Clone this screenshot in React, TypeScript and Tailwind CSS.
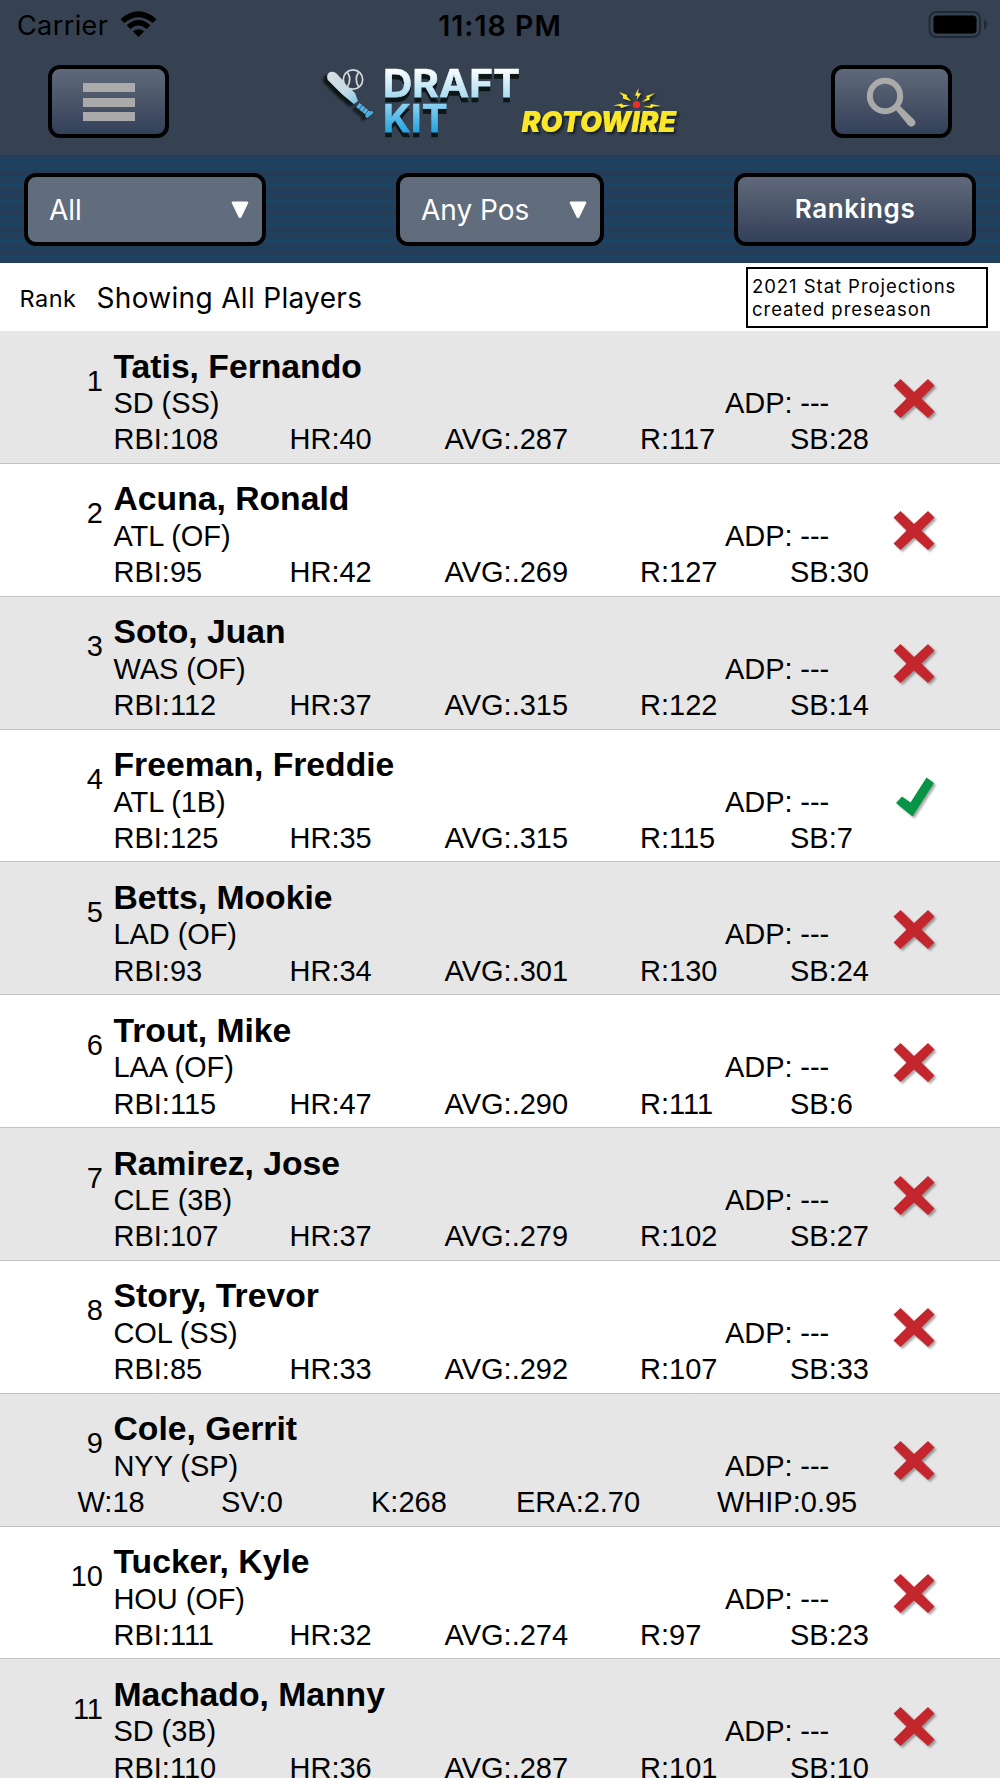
const players: [string, string, string[]][] = [
  ['Tatis, Fernando', 'SD (SS)', ['RBI:108', 'HR:40', 'AVG:.287', 'R:117', 'SB:28']],
  ['Acuna, Ronald', 'ATL (OF)', ['RBI:95', 'HR:42', 'AVG:.269', 'R:127', 'SB:30']],
  ['Soto, Juan', 'WAS (OF)', ['RBI:112', 'HR:37', 'AVG:.315', 'R:122', 'SB:14']],
  ['Freeman, Freddie', 'ATL (1B)', ['RBI:125', 'HR:35', 'AVG:.315', 'R:115', 'SB:7']],
  ['Betts, Mookie', 'LAD (OF)', ['RBI:93', 'HR:34', 'AVG:.301', 'R:130', 'SB:24']],
  ['Trout, Mike', 'LAA (OF)', ['RBI:115', 'HR:47', 'AVG:.290', 'R:111', 'SB:6']],
  ['Ramirez, Jose', 'CLE (3B)', ['RBI:107', 'HR:37', 'AVG:.279', 'R:102', 'SB:27']],
  ['Story, Trevor', 'COL (SS)', ['RBI:85', 'HR:33', 'AVG:.292', 'R:107', 'SB:33']],
  ['Cole, Gerrit', 'NYY (SP)', ['W:18', 'SV:0', 'K:268', 'ERA:2.70', 'WHIP:0.95']],
  ['Tucker, Kyle', 'HOU (OF)', ['RBI:111', 'HR:32', 'AVG:.274', 'R:97', 'SB:23']],
  ['Machado, Manny', 'SD (3B)', ['RBI:110', 'HR:36', 'AVG:.287', 'R:101', 'SB:10']],
];

const button = 'box-border flex items-center rounded-[12px] border-[4px] border-black';
const glossy = 'bg-linear-to-b from-[#5f697a] via-[#4a5569] to-[#343f5a]';

function StatusBar() {
  return (
    <div className="grid h-[50px] grid-cols-3 items-center px-[17px]">
      <div className="flex items-center">
        <span className="w-[92px] pt-[2px] text-[27px] whitespace-nowrap tracking-[0.400px]">Carrier</span>
        <svg className="mb-[3px] ml-[11px]" width="37" height="28" viewBox="0 0 37 28">
          <path d="M0.5 9.2Q18.500-6.500 36.500 9.200L32.700 13Q18.500 1.500 4.300 13Z" />
          <path d="M6.600 15.300Q18.500 4.900 30.400 15.300L26.600 19Q18.500 12.100 10.400 19Z" />
          <path d="M12.900 21.500Q18.500 16.800 24.100 21.500L18.500 27Z" />
        </svg>
      </div>
      <div className="pt-[2px] text-center text-[28.500px] font-semibold tracking-[1.050px]">11:18 PM</div>
      <svg className="-mr-[5px] mb-[1px] justify-self-end" width="60" height="28" viewBox="0 0 60 28">
        <rect x="1.500" y="1" width="50.500" height="25" rx="7" fill="none" stroke="#202a37" strokeWidth="2" />
        <rect x="5.500" y="4.500" width="43" height="18" rx="3.500" />
        <path d="M56 8.500Q59 10 59 13.500Q59 17 56 18.500Z" fill="#202a37" />
      </svg>
    </div>
  );
}

function Logo() {
  return (
    <svg width="370" height="82" viewBox="315 60 370 82">
      <defs>
        <linearGradient id="sky" gradientUnits="userSpaceOnUse" x1="0" y1="68" x2="0" y2="132">
          <stop offset="0" stopColor="#fff" />
          <stop offset="0.45" stopColor="#a9dcf3" />
          <stop offset="1" stopColor="#22a5e2" />
        </linearGradient>
        <linearGradient id="bat" gradientUnits="userSpaceOnUse" x1="328" y1="72" x2="371" y2="116">
          <stop offset="0" stopColor="#dadde0" />
          <stop offset="0.45" stopColor="#bfdbe9" />
          <stop offset="1" stopColor="#35a9e3" />
        </linearGradient>
        <filter id="drop" x="-20%" y="-20%" width="150%" height="150%">
          <feDropShadow dx="0" dy="5" stdDeviation="0.7" floodColor="#0d1218" floodOpacity="1" />
        </filter>
        <filter id="dropBat" x="-20%" y="-20%" width="150%" height="150%">
          <feDropShadow dx="-4" dy="3" stdDeviation="0.9" floodColor="#0d1218" floodOpacity="1" />
        </filter>
        <filter id="dropWire" x="-10%" y="-20%" width="130%" height="150%">
          <feDropShadow dx="2" dy="2" stdDeviation="0.8" floodColor="#10151c" floodOpacity="0.9" />
        </filter>
      </defs>
      <g filter="url(#dropBat)">
        <path d="M328 80C325 73 332 69 337 74L348 86L355 93L358 101L354 104L342 94Z" fill="url(#bat)" />
        <path d="M358 105L369 114" stroke="#55b5e6" strokeWidth="5" strokeDasharray="3.200 0.700" />
        <path d="M367 116L371.500 112.500" stroke="#43afe3" strokeWidth="3" strokeLinecap="round" />
      </g>
      <g fill="none" stroke="#d5d9dc" strokeWidth="1.700">
        <circle cx="353" cy="79.500" r="9.700" fill="#344050" />
        <path d="M347.500 72.500Q352 79 347.500 86.500M358.500 72.500Q354 79 358.500 86.500" />
      </g>
      <g filter="url(#drop)" fill="url(#sky)" stroke="url(#sky)" strokeWidth="0.500" fontFamily="Inter, sans-serif" fontWeight="700" fontSize="38.500">
        <text x="383" y="97" textLength="137" lengthAdjust="spacingAndGlyphs">DRAFT</text>
        <text x="383" y="132" textLength="64.500" lengthAdjust="spacingAndGlyphs">KIT</text>
      </g>
      <g filter="url(#dropWire)" fill="#fbe72a">
        <text x="521.500" y="131.500" fontFamily="Inter, sans-serif" fontWeight="900" fontStyle="italic" fontSize="28" textLength="154.500" lengthAdjust="spacingAndGlyphs">ROTOWIRE</text>
        <path d="M613 105.500L622 103.500L623 105L630 105L621 108L620 106Z" />
        <path d="M619 92L627 95L627 97L631 101L623 98.500L623 96Z" />
        <path d="M638.500 88L635 95.500L637.500 96L636.500 100L641 93.500L638 93Z" />
        <path d="M655 93L646 96L647 98L642 102L650 99.500L649 97.500Z" />
        <path d="M661 106L651 104L650 106L643 106.500L652 108L653 106.500Z" />
      </g>
      <circle cx="636.500" cy="104.500" r="3.600" fill="#ee2c2b" />
    </svg>
  );
}

function Mark({ taken }: { taken: boolean }) {
  return (
    <svg className="overflow-visible drop-shadow-[2px_2px_1px_rgba(0,0,0,0.35)]" width="42" height="42" viewBox="0 0 42 42">
      {taken ? (
        <path d="M9 19.500L17.500 25.500L33.500 0.500L41 6L19.500 39.500L3 26Z" fill="#079447" />
      ) : (
        <path d="M7.500 0L21 13L35 0L41.500 6.500L28.500 19.500L41.500 32.500L35 39L21 26.500L7.500 39L0.500 32.500L13.500 19.500L0.500 6.500Z" fill="#c4262e" />
      )}
    </svg>
  );
}

function Row({ index }: { index: number }) {
  const [name, team, stats] = players[index];
  const pitcher = stats[0].startsWith('W');
  return (
    <div className={`flex h-[132.850px] w-full border-b border-[#c3c3c3] font-['Liberation_Sans',sans-serif] text-[29px] leading-[36.500px] ${index % 2 ? 'bg-white' : 'bg-[#e6e6e6]'}`}>
      <div className="w-[103px] shrink-0 pt-[31.500px] text-right">{index + 1}</div>
      <div className="w-[770px] pt-[16.500px]">
        <div className="ml-[10.500px] h-[37.500px] text-[33.700px] leading-[36px] font-bold">{name}</div>
        <div className="ml-[10.500px] flex h-[36.300px] tracking-[-0.080px]">
          <div className="w-[611.500px]">{team}</div>
          <div>ADP: ---</div>
        </div>
        <div className={pitcher ? '-ml-[25.500px] grid grid-cols-[143.500px_150px_145px_201px_160px]' : 'ml-[10.500px] grid grid-cols-[176px_155px_195.500px_150px_100px]'}>
          {stats.map((s) => <div key={s}>{s}</div>)}
        </div>
      </div>
      <div className="ml-[20px] pt-[47.500px]"><Mark taken={index === 3} /></div>
    </div>
  );
}

function Triangle() {
  return (
    <svg width="18" height="18" viewBox="0 0 18 18" fill="white"><path d="M2 0.500H16Q18 0.500 17 2.500L10.500 16Q9 18.500 7.500 16L1 2.500Q0 0.500 2 0.500Z" /></svg>
  );
}

export default function App() {
  return (
    <div className="flex h-[1778px] w-[1000px] flex-col overflow-hidden bg-white font-['Inter',sans-serif] text-black">
      <header className="h-[154px] shrink-0 bg-[#364151]">
        <StatusBar />
        <div className="flex h-[104px] items-start justify-between px-[48px]">
          <button className={`${button} ${glossy} mt-[15px] h-[73px] w-[121px] flex-col justify-center gap-[5.500px] pt-[1px]`}>
            <span className="h-[9px] w-[52px] bg-[#aaa]" />
            <span className="h-[9px] w-[52px] bg-[#aaa]" />
            <span className="h-[9px] w-[52px] bg-[#aaa]" />
          </button>
          <div className="mt-[10px]"><Logo /></div>
          <button className={`${button} ${glossy} mt-[15px] h-[73px] w-[121px] justify-center`}>
            <svg className="-ml-[2px]" width="50" height="50" viewBox="0 0 50 50" fill="none" stroke="#aaa">
              <circle cx="19" cy="19" r="15.200" strokeWidth="6" />
              <path d="M33.500 28.500L48 42.500Q51 46 48 48.500Q45 51 42 48L29.500 32.500Z" fill="#aaa" stroke="none" />
            </svg>
          </button>
        </div>
      </header>
      <div className="flex h-[109px] shrink-0 items-start justify-between border-t border-[#2c4257] bg-[#1f4060] bg-[repeating-linear-gradient(to_bottom,rgba(42,52,75,0.35)_0,rgba(20,72,106,0.25)_9.500px,rgba(42,52,75,0.35)_19px),repeating-linear-gradient(to_bottom,#18486a_0,#283b54_1.333px,#283b54_1.600px,#18486a_2.667px)] px-[24px] pt-[18px] text-[28px]">
        <div className={`${button} h-[73px] w-[242px] justify-between bg-[#616c7c] pr-[13.500px] pl-[21px] text-white`}>
          <span>All</span>
          <Triangle />
        </div>
        <div className={`${button} h-[73px] w-[208px] justify-between bg-[#616c7c] pr-[13.500px] pl-[21px] text-white`}>
          <span>Any Pos</span>
          <Triangle />
        </div>
        <button className={`${button} ${glossy} h-[73px] w-[242px] justify-center pb-[2px] text-[26px] font-semibold tracking-[0.600px] text-white`}>Rankings</button>
      </div>
      <div className="flex h-[68px] shrink-0 items-center pr-[12px] pl-[19.500px]">
        <span className="w-[77px] pt-[3px] text-[23.500px] tracking-[0.500px]">Rank</span>
        <span className="pt-[2px] text-[28px] tracking-[0.320px]">Showing All Players</span>
        <div className="ml-auto h-[61px] w-[242px] border-[2px] border-black px-[4px] pt-[6px] text-[18.500px] leading-[23px] tracking-[0.950px]">
          2021 Stat Projections<br />created preseason
        </div>
      </div>
      {players.map((p, i) => (
        <div key={p[0]} className="shrink-0"><Row index={i} /></div>
      ))}
    </div>
  );
}
